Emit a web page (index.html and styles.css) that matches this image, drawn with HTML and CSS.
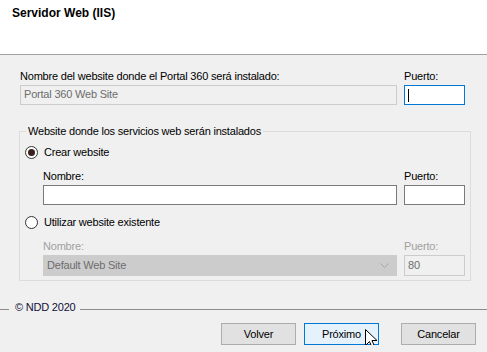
FILE: index.html
```html
<!DOCTYPE html>
<html lang="es">
<head>
  <meta charset="UTF-8" />
  <title>Servidor Web (IIS)</title>
  <link rel="stylesheet" href="styles.css">
</head>
<body>

<header class="page-head">
  <h1>Servidor Web (IIS)</h1>
</header>

<main class="page-body">
  <div class="field-row site-row">
    <div class="field">
      <label>Nombre del website donde el Portal 360 será instalado:</label>
      <div class="box disabled">Portal 360 Web Site</div>
    </div>
    <div class="field">
      <label>Puerto:</label>
      <div class="box focused"><span class="caret"></span></div>
    </div>
  </div>

  <fieldset class="group">
    <legend>Website donde los servicios web serán instalados</legend>
    <div class="group-inner">
      <div class="radio-row">
        <span class="radio checked"></span>
        <span>Crear website</span>
      </div>
      <div class="field-row sub-row">
        <div class="field">
          <label>Nombre:</label>
          <div class="box"></div>
        </div>
        <div class="field">
          <label>Puerto:</label>
          <div class="box"></div>
        </div>
      </div>

      <div class="radio-row second">
        <span class="radio"></span>
        <span>Utilizar website existente</span>
      </div>
      <div class="field-row sub-row off">
        <div class="field">
          <label>Nombre:</label>
          <div class="box combo">
            <span>Default Web Site</span>
            <svg width="9" height="5" viewBox="0 0 9 5"><path d="M0.5 0.5 L4.5 4.5 L8.5 0.5" fill="none" stroke="#a6a6a6" stroke-width="1"/></svg>
          </div>
        </div>
        <div class="field">
          <label>Puerto:</label>
          <div class="box disabled tall">80</div>
        </div>
      </div>
    </div>
  </fieldset>

  <div class="brand-line">
    <span class="rule short"></span>
    <span class="brand">© NDD 2020</span>
    <span class="rule"></span>
  </div>

  <div class="buttons">
    <button class="btn">Volver</button>
    <button class="btn default">Próximo
      <svg class="pointer" width="14" height="21" viewBox="0 0 14 21">
        <path d="M0.5 0.5 L0.5 16.5 L4.5 12.5 L7.5 19.5 L10 18.5 L7 11.5 L12 11.5 Z" fill="#fff" stroke="#000" stroke-width="1" stroke-linejoin="miter"/>
      </svg>
    </button>
    <button class="btn cancel">Cancelar</button>
  </div>
</main>

</body>
</html>
```

FILE: styles.css
```css
html, body {
  margin: 0;
  font-family: 'Liberation Sans', Arial, sans-serif;
  font-size: 11px;
  line-height: 13px;
  letter-spacing: -0.2px;
  background: #f0f0f0;
  color: #000;
}
.page-head {
  box-sizing: border-box;
  height: 55px;
  background: #fff;
  border-bottom: 1px solid #a0a0a0;
  padding: 6px 12px 0;
}
.page-head h1 {
  margin: 0;
  font-size: 12px;
  line-height: 14px;
  font-weight: bold;
  letter-spacing: 0;
}
.page-body {
  padding-top: 15px;
}
.field-row {
  display: grid;
  grid-template-columns: 1fr 61px;
  column-gap: 7px;
}
.site-row {
  padding: 0 22px 0 20px;
}
.field label {
  display: block;
  margin-bottom: 2px;
}
.box {
  box-sizing: border-box;
  height: 20px;
  background: #fff;
  border: 1px solid #7a7a7a;
  padding: 2px 3px 0;
  white-space: nowrap;
  overflow: hidden;
}
.box.disabled {
  background: #f0f0f0;
  border-color: #cccccc;
  color: #6d6d6d;
}
.box.focused {
  border-color: #0078d7;
}
.caret {
  display: inline-block;
  width: 1px;
  height: 13px;
  margin-top: 1px;
  background: #000;
}

/* group box */
.group {
  margin: 20px 16px 0 19px;
  padding: 0;
  border: 1px solid #dcdcdc;
}
.group legend {
  margin-left: 6px;
  padding: 0 2px;
  line-height: 13px;
}
.group-inner {
  padding: 8px 5px 4px 5px;
}
.radio-row {
  display: flex;
  align-items: center;
  gap: 6px;
  height: 13px;
}
.radio-row.second {
  margin-top: 11px;
}
.radio {
  box-sizing: border-box;
  width: 13px;
  height: 13px;
  border: 1px solid #333;
  border-radius: 50%;
  background: #fff;
  display: flex;
  align-items: center;
  justify-content: center;
}
.radio.checked::after {
  content: '';
  width: 7px;
  height: 7px;
  border-radius: 50%;
  background: #3a1f1f;
}
.sub-row {
  padding-left: 18px;
  margin-top: 11px;
}
.sub-row.off {
  margin-top: 11px;
}
.sub-row.off label {
  color: #a0a0a0;
}
.box.tall {
  height: 21px;
  padding-top: 3px;
}
.box.combo {
  height: 21px;
  background: #cccccc;
  border-color: #cccccc;
  color: #6d6d6d;
  display: flex;
  align-items: center;
  justify-content: space-between;
  padding: 0 7px 0 3px;
}

/* footer */
.brand-line {
  display: flex;
  align-items: flex-start;
  margin-top: 20px;
  height: 13px;
}
.rule {
  flex: 1;
  height: 1px;
  margin-top: 8px;
  background: #8c8c8c;
}
.rule.short {
  flex: 0 0 9px;
}
.brand {
  margin: 0 4px 0 6px;
  color: #10103a;
}
.buttons {
  display: flex;
  justify-content: flex-end;
  margin-top: 9px;
  padding-right: 11px;
}
.btn {
  position: relative;
  box-sizing: border-box;
  width: 75px;
  height: 22px;
  margin-left: 8px;
  padding: 0;
  font-family: inherit;
  font-size: 11px;
  letter-spacing: -0.2px;
  color: #000;
  background: #e1e1e1;
  border: 1px solid #adadad;
}
.btn.default {
  background: #e5f1fb;
  border-color: #0078d7;
}
.btn.cancel {
  margin-left: 22px;
}
.pointer {
  position: absolute;
  left: 60px;
  top: 5px;
}
```
